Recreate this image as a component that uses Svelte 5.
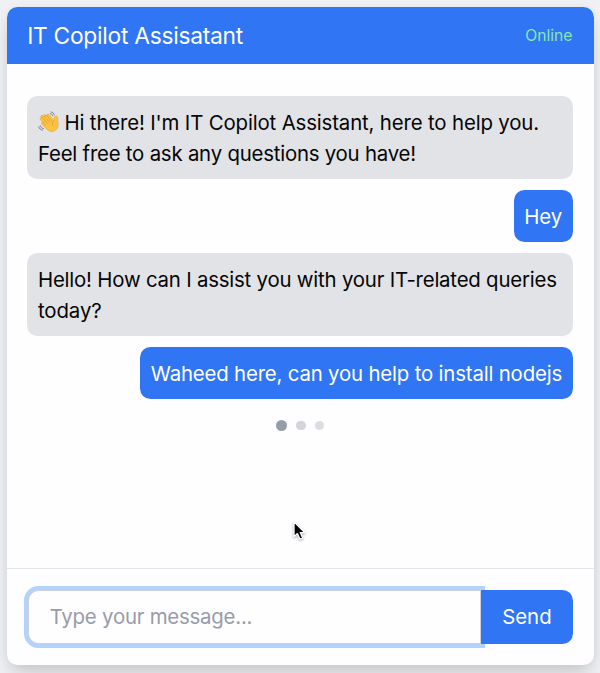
<script>
  const messages = [
    {
      from: 'bot',
      wave: true,
      lines: [
        { text: "Hi there! I'm IT Copilot Assistant, here to help you.", spacing: -0.15 },
        { text: 'Feel free to ask any questions you have!', spacing: -0.22 }
      ]
    },
    { from: 'user', lines: [{ text: 'Hey', spacing: -0.15 }] },
    {
      from: 'bot',
      lines: [
        { text: 'Hello! How can I assist you with your IT-related queries', spacing: -0.205 },
        { text: 'today?', spacing: -0.1 }
      ]
    },
    { from: 'user', lines: [{ text: 'Waheed here, can you help to install nodejs', spacing: -0.18 }] }
  ];
</script>

<main class="page">
  <section class="card">
    <header class="top">
      <h1>IT Copilot Assisatant</h1>
      <span class="status">Online</span>
    </header>

    <div class="messages">
      {#each messages as m}
        <div class="bubble {m.from}">
          {#each m.lines as line, i}
            <div class="line" style="letter-spacing: {line.spacing}px">
              {#if m.wave && i === 0}
                <svg class="wave" viewBox="0 0 22 22" aria-label="waving hand">
                  <path d="M3.1 5.8C2.5 4.5 4.1 3.6 5 4.6L6 5.6C5.2 3.9 6.8 2.8 8 4L9 5C8.4 3.2 10.1 2.4 11.2 3.7L15.7 9.5C16.2 8.4 16 7 16.6 5.9C17.3 4.4 19.5 4.8 19.7 6.5C19.8 8.2 19.8 9.8 20.1 11.5C20.7 14.5 20 17.4 17.4 19.3C14.5 21.3 11.2 20.6 8.8 18.3L4 13.4C2.9 12.2 4 10.9 5.2 11.8L2.5 8.8C1.4 7.6 2.4 6.2 3.8 7Z" fill="#fcc23d" stroke="#d89a36" stroke-width=".5" />
                  <path d="M3.8 6.2 9.2 12M6.1 5.4 11.4 11M9 4.8 13.4 10M5.1 11.7 7.5 14M15.7 9.6C14.3 10.7 14 12.5 14.5 14" fill="none" stroke="#d99231" stroke-width=".6" stroke-linecap="round" />
                  <path d="M13 .9C14.8 1.1 15.9 2.3 16.2 4M12.4 2.7C13.7 2.9 14.5 3.7 14.7 4.9M.8 15.7C1.2 17.7 2.5 19 4.5 19.1M2.4 14.8C2.8 16.5 3.8 17.4 5.5 17.6" fill="none" stroke="#777981" stroke-width=".9" stroke-linecap="round" />
                </svg>
              {/if}{line.text}
            </div>
          {/each}
        </div>
      {/each}
      <div class="typing">
        <span class="dot first"></span>
        <span class="dot second"></span>
        <span class="dot third"></span>
      </div>
    </div>

    <form class="composer" onsubmit={(e) => e.preventDefault()}>
      <input type="text" placeholder="Type your message..." />
      <button type="submit">Send</button>
    </form>
  </section>

  <svg class="cursor" viewBox="0 0 16 24" aria-hidden="true">
    <path d="M2 2V18.2L5.7 14.8L8.4 20.8L11.4 19.5L8.8 13.7H13.7Z" fill="#000" stroke="#fff" stroke-width="1.4" stroke-linejoin="round" />
  </svg>
</main>

<style>
  :global(body) {
    margin: 0;
    background: #f0f1f4;
  }
  .page {
    box-sizing: border-box;
    width: 600px;
    height: 673px;
    padding: 6.7px 6.5px 8px 6.7px;
    overflow: hidden;
    position: relative;
    font-family: Inter, 'Liberation Sans', sans-serif;
    font-size: 20.4px;
    color: #050506;
  }
  .card {
    height: 100%;
    display: flex;
    flex-direction: column;
    background: #fefdff;
    border-radius: 10.5px;
    box-shadow: 0 13px 20px -4px rgba(0, 0, 0, 0.16), 0 0 10px rgba(0, 0, 0, 0.055);
  }
  .top {
    box-sizing: border-box;
    height: 57.5px;
    flex: none;
    display: flex;
    align-items: center;
    justify-content: space-between;
    padding: 1px 21px 0 20.5px;
    background: #3075f4;
    border-radius: 10.5px 10.5px 0 0;
  }
  h1 {
    margin: 0;
    font-size: 22.8px;
    font-weight: 400;
    letter-spacing: -0.28px;
    color: #fff;
  }
  .status {
    font-size: 15.7px;
    color: #86e7ac;
  }
  .messages {
    flex: 1;
    min-height: 0;
    display: flex;
    flex-direction: column;
    align-items: flex-end;
    gap: 10.6px;
    padding: 31.6px 21px 0 20.8px;
  }
  .bubble {
    box-sizing: border-box;
    padding: 11px 10.5px 10px;
    border-radius: 10.5px;
  }
  .bot {
    width: 100%;
    background: #e2e3e7;
  }
  .user {
    background: #3075f4;
    color: #fff;
  }
  .line {
    display: flex;
    align-items: center;
    height: 31.3px;
    line-height: 31.3px;
    white-space: nowrap;
  }
  .wave {
    width: 22px;
    height: 22px;
    margin: -1px 4.5px 0 0;
    flex: none;
  }
  .typing {
    align-self: center;
    display: flex;
    align-items: center;
    gap: 9.2px;
    height: 11px;
    margin-top: 10px;
  }
  .dot {
    border-radius: 50%;
  }
  .first {
    width: 11px;
    height: 11px;
    background: #969ca8;
  }
  .second {
    width: 9.4px;
    height: 9.4px;
    background: #d2d4d9;
  }
  .third {
    width: 9px;
    height: 9px;
    background: #dcdde2;
  }
  .composer {
    box-sizing: border-box;
    height: 97.2px;
    flex: none;
    display: flex;
    padding: 20.7px 21px 20.9px;
    border-top: 1.3px solid #e3e4e8;
  }
  input {
    box-sizing: border-box;
    flex: 1;
    min-width: 0;
    border: 1.3px solid #ccd0d8;
    border-radius: 10.5px 0 0 10.5px;
    padding: 0 21px;
    background: #fefdff;
    box-shadow: 0 0 0 4px #b3d2fc;
    font: inherit;
    letter-spacing: -0.22px;
    outline: none;
  }
  input::placeholder {
    color: #989ca8;
    opacity: 1;
  }
  button {
    box-sizing: border-box;
    width: 91.2px;
    border: 0;
    padding: 0;
    background: #3075f4;
    border-radius: 0 10.5px 10.5px 0;
    position: relative;
    font: inherit;
    color: #fff;
  }
  .cursor {
    position: absolute;
    left: 292px;
    top: 520px;
    width: 15px;
    height: 22px;
    filter: drop-shadow(0 1px 1px rgba(0, 0, 0, 0.35));
  }
</style>
